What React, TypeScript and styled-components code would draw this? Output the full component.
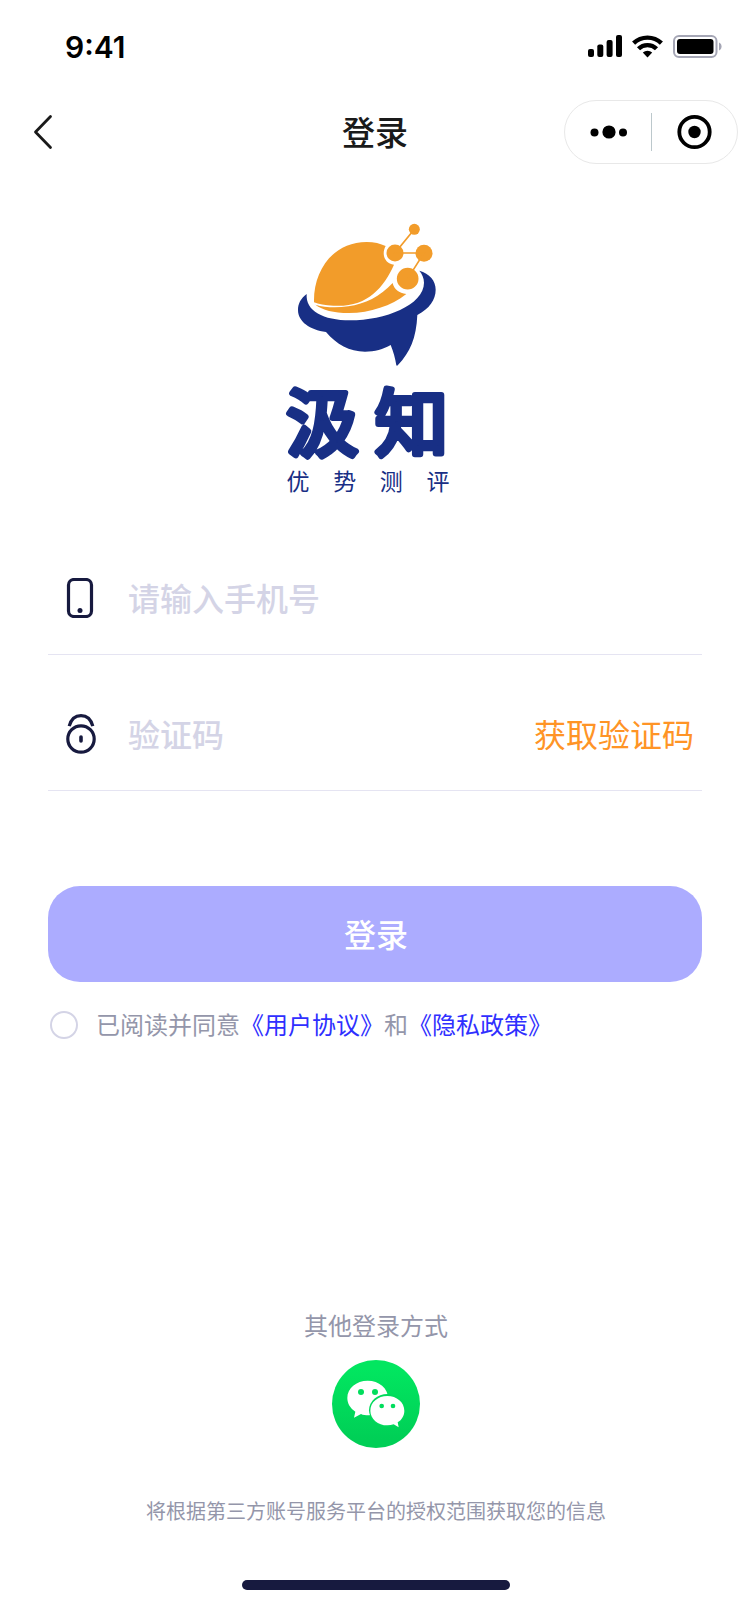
import React from 'react';
import styled, { createGlobalStyle } from 'styled-components';

const GlobalStyle = createGlobalStyle`
  *, *::before, *::after { box-sizing: border-box; }
  body {
    margin: 0;
    background: #fff;
    font-family: Inter, "Noto Sans CJK SC", sans-serif;
  }
  button, input { font-family: inherit; }
`;

const cjk = `"Noto Sans CJK SC", sans-serif`;

const Page = styled.div`
  min-height: 100vh;
  display: flex;
  flex-direction: column;
  padding-bottom: 34px;
  font-family: ${cjk};
  color: #171a3f;
`;

const StatusBar = styled.div`
  height: 88px;
  display: flex;
  align-items: center;
  justify-content: space-between;
  padding: 6px 28px 0 65px;
`;

const Clock = styled.time`
  font: 600 30px/36px Inter, sans-serif;
  color: #000;
`;

const StatusIcons = styled.div`
  display: flex;
  align-items: center;
  gap: 10px;
  padding-bottom: 2px;
  svg { display: block; }
`;

const NavBar = styled.header`
  height: 88px;
  display: grid;
  grid-template-columns: 1fr auto 1fr;
  align-items: center;
  padding: 0 12px;
`;

const IconButton = styled.button`
  display: flex;
  align-items: center;
  justify-content: center;
  border: 0;
  padding: 0;
  background: none;
  cursor: pointer;
`;

const BackButton = styled(IconButton)`
  width: 62px;
  height: 64px;
`;

const Title = styled.h1`
  margin: 0;
  padding-bottom: 2px;
  font-size: 33px;
  line-height: 48px;
  font-weight: 500;
  color: #1a1a1a;
`;

const Capsule = styled.div`
  justify-self: end;
  display: flex;
  align-items: center;
  width: 174px;
  height: 64px;
  border: 1px solid #e8e8e8;
  border-radius: 32px;
`;

const CapsuleButton = styled(IconButton)`
  flex: 1;
  height: 100%;
`;

const Divider = styled.span`
  width: 1px;
  height: 38px;
  background: #bcc8cc;
`;

const Brand = styled.div`
  display: flex;
  flex-direction: column;
  align-items: center;
  padding: 34px 14px 0 0;
  color: #182f85;
  svg { display: block; }
`;

const Wordmark = styled.svg`
  width: 166px;
  height: 86px;
  overflow: visible;
  font-family: ${cjk};
  font-size: 73px;
  font-weight: 400;
  fill: currentColor;
  stroke: currentColor;
  stroke-width: 6px;
  stroke-linejoin: round;
  stroke-linecap: round;
`;

const Tagline = styled.div`
  display: flex;
  justify-content: space-between;
  width: 163px;
  font-size: 23px;
  line-height: 28px;
`;

const Form = styled.form`
  display: flex;
  flex-direction: column;
  padding: 25px 48px 0;
`;

const Field = styled.div`
  display: flex;
  align-items: center;
  height: 136px;
  padding: 22px 8px 0 16px;
  border-bottom: 1px solid #e5e4f2;
`;

const FieldLabel = styled.label`
  display: flex;
  width: 64px;
`;

const TextInput = styled.input`
  flex: 1;
  min-width: 0;
  height: 48px;
  border: 0;
  padding: 0 0 2px;
  outline: 0;
  background: none;
  font-size: 32px;
  font-weight: 500;
  color: #171a3f;
  &::placeholder { color: #d4d4e6; opacity: 1; }
`;

const CodeButton = styled.button`
  border: 0;
  padding: 0 0 2px;
  background: none;
  font-size: 32px;
  line-height: 46px;
  color: #ff9426;
  cursor: pointer;
`;

const SubmitButton = styled.button`
  height: 96px;
  margin-top: 95px;
  border: 0;
  border-radius: 32px;
  padding: 0 0 2px 2px;
  background: #acacff;
  color: #fff;
  font-size: 32px;
  line-height: 48px;
  font-weight: 500;
  cursor: pointer;
`;

const Agreement = styled.div`
  display: flex;
  align-items: center;
  gap: 18px;
  margin-top: 24px;
  padding-left: 2px;
  font-size: 24px;
  line-height: 36px;
  color: #9496aa;
  a { color: #2f2fff; text-decoration: none; }
`;

const AgreementText = styled.div`
  padding-bottom: 2px;
`;

const RoundCheckbox = styled.input`
  appearance: none;
  flex: none;
  width: 28px;
  height: 28px;
  margin: 0;
  border: 2px solid #d4d4e6;
  border-radius: 50%;
  cursor: pointer;
  &:checked { background: #2f2fff; border-color: #2f2fff; }
`;

const Footer = styled.footer`
  display: flex;
  flex-direction: column;
  align-items: center;
  margin-top: auto;
  padding-left: 2px;
  color: #9496aa;
`;

const OtherTitle = styled.h2`
  margin: 0 0 17px;
  font-size: 24px;
  line-height: 36px;
  font-weight: 400;
`;

const Notice = styled.p`
  margin: 48px 0 0;
  font-size: 20px;
  line-height: 30px;
`;

const HomeIndicator = styled.div`
  width: 268px;
  height: 10px;
  margin-top: 54px;
  border-radius: 5px;
  background: #171a3f;
`;

const SignalIcon = () => (
  <svg width="34" height="22" viewBox="0 0 34 22" aria-hidden="true">
    <rect x="0" y="14" width="6" height="8" rx="2" />
    <rect x="9.3" y="9.5" width="6" height="12.5" rx="2" />
    <rect x="18.6" y="5" width="6" height="17" rx="2" />
    <rect x="28" y="0" width="6" height="22" rx="2" />
  </svg>
);

const WifiIcon = () => (
  <svg width="31" height="23" viewBox="0 0 31 23" aria-hidden="true">
    <g fill="none" stroke="#000" strokeWidth="4.4">
      <path d="M1.6 8.2a20 20 0 0 1 27.8 0" />
      <path d="M6.5 13.8a12.8 12.8 0 0 1 18 0" />
    </g>
    <path d="M10.8 17.6a7 7 0 0 1 9.4 0L15.5 22.6z" />
  </svg>
);

const BatteryIcon = () => (
  <svg width="49" height="23" viewBox="0 0 49 23" aria-hidden="true">
    <rect x="1" y="1" width="42.5" height="21" rx="5" fill="none" stroke="#a5a6b5" strokeWidth="2" />
    <rect x="4" y="4" width="36.5" height="15" rx="3" />
    <path d="M46 7.5c3.4 1.2 3.4 6.8 0 8z" fill="#a5a6b5" />
  </svg>
);

const BackIcon = () => (
  <svg width="20" height="36" viewBox="0 0 20 36" fill="none" stroke="#1a1a1a" strokeWidth="2.8" strokeLinecap="round" strokeLinejoin="round" aria-hidden="true">
    <path d="M17.5 2.5 2.5 18l15 15.5" />
  </svg>
);

const MoreIcon = () => (
  <svg width="38" height="14" viewBox="0 0 38 14" aria-hidden="true">
    <circle cx="5.5" cy="7.5" r="4" />
    <circle cx="20" cy="7" r="6.6" />
    <circle cx="34" cy="7.5" r="4" />
  </svg>
);

const CloseIcon = () => (
  <svg width="36" height="36" viewBox="0 0 36 36" aria-hidden="true">
    <circle cx="18.5" cy="18" r="15.2" fill="none" stroke="#000" strokeWidth="3.8" />
    <circle cx="18.5" cy="18" r="6.2" />
  </svg>
);

const LogoMark = () => (
  <svg width="200" height="170" viewBox="-6 0 600 510" aria-hidden="true">
    <path
      fill="#182f85"
      d="M110 252C92 265 84 282 84 300C84 335 120 360 168 366C200 403 238 425 285 425C314 425 340 418 362 405C370 424 376 446 379 466Q381 469 384 465C420 427 439 385 442 315C478 296 497 269 497 239C497 212 479 191 448 182C456 192 462 203 462 218C462 285 345 331 240 331C160 331 106 303 110 252Z"
    />
    <g fill="#f29c2a">
      <path d="M132 277C130 180 190 96 290 96C312 96 332 101 347 108C333 134 345 161 372 164C340 235 290 293 190 287C165 286 145 282 132 277Z" />
      <path d="M136 284C165 293 200 294 235 289C285 282 330 260 368 219C372 237 387 250 409 252C365 287 300 309 237 309C190 309 158 300 136 284Z" />
      <circle cx="375" cy="129" r="25.5" />
      <circle cx="462" cy="130" r="25.5" />
      <circle cx="433" cy="58" r="16.5" />
      <circle cx="413" cy="206" r="32.5" />
    </g>
    <path d="M433 58 375 129H462L413 206" fill="none" stroke="#f29c2a" strokeWidth="5" />
  </svg>
);

const PhoneIcon = () => (
  <svg width="32" height="40" viewBox="0 0 32 40" aria-hidden="true">
    <rect x="4.5" y="1.5" width="23" height="37" rx="5.5" fill="none" stroke="#171a3f" strokeWidth="3.2" />
    <circle cx="16" cy="32.5" r="2.5" fill="#171a3f" />
  </svg>
);

const LockIcon = () => (
  <svg width="32" height="40" viewBox="0 0 32 40" fill="none" stroke="#171a3f" strokeWidth="3.2" aria-hidden="true">
    <circle cx="17" cy="25" r="13.2" />
    <path d="M5.2 12.2C7 5.5 11.5 1.7 17 1.7S27 5.5 28.8 12.2" />
    <path d="M17 23v4" strokeWidth="3.6" strokeLinecap="round" />
  </svg>
);

const WechatIcon = () => (
  <svg width="88" height="88" viewBox="156 210 264 264" aria-hidden="true">
    <defs>
      <linearGradient id="wechat-green" x1="0" y1="0" x2="0" y2="1">
        <stop offset="0.1" stopColor="#02e660" />
        <stop offset="0.9" stopColor="#00cf56" />
      </linearGradient>
    </defs>
    <circle cx="288" cy="342" r="132" fill="url(#wechat-green)" />
    <path fill="#fff" d="M263 272C229 272 202 295 202 324C202 341 211 355 226 365L222 383L243 372C249 375 257 376 266 376C300 376 324 353 324 324C324 295 297 272 263 272Z" />
    <ellipse cx="322" cy="361" rx="55" ry="49" fill="#01da5b" />
    <path fill="#fff" d="M322 318C294 318 271 337 271 362C271 387 294 406 322 406C329 406 335 405 341 403L356 412L353 397C366 389 373 376 373 362C373 337 350 318 322 318Z" />
    <g fill="#01dd5c">
      <circle cx="243" cy="306" r="9" />
      <circle cx="285" cy="306" r="9" />
      <circle cx="305" cy="348" r="7" />
      <circle cx="339" cy="348" r="7" />
    </g>
  </svg>
);

export default function App() {
  return (
    <Page>
      <GlobalStyle />
      <StatusBar>
        <Clock>9:41</Clock>
        <StatusIcons>
          <SignalIcon />
          <WifiIcon />
          <BatteryIcon />
        </StatusIcons>
      </StatusBar>
      <NavBar>
        <BackButton type="button" aria-label="返回"><BackIcon /></BackButton>
        <Title>登录</Title>
        <Capsule>
          <CapsuleButton type="button" aria-label="更多"><MoreIcon /></CapsuleButton>
          <Divider />
          <CapsuleButton type="button" aria-label="关闭"><CloseIcon /></CapsuleButton>
        </Capsule>
      </NavBar>
      <Brand>
        <LogoMark />
        <Wordmark viewBox="0 0 166 86">
          <text x="1" y="70">汲</text>
          <text x="90" y="70">知</text>
        </Wordmark>
        <Tagline><span>优</span><span>势</span><span>测</span><span>评</span></Tagline>
      </Brand>
      <Form onSubmit={(e) => e.preventDefault()}>
        <Field>
          <FieldLabel htmlFor="phone" aria-label="手机号"><PhoneIcon /></FieldLabel>
          <TextInput id="phone" type="tel" placeholder="请输入手机号" />
        </Field>
        <Field>
          <FieldLabel htmlFor="code" aria-label="验证码"><LockIcon /></FieldLabel>
          <TextInput id="code" type="text" inputMode="numeric" placeholder="验证码" />
          <CodeButton type="button">获取验证码</CodeButton>
        </Field>
        <SubmitButton type="submit">登录</SubmitButton>
        <Agreement>
          <RoundCheckbox id="agree" type="checkbox" />
          <AgreementText>
            <label htmlFor="agree">已阅读并同意</label>
            <a href="#terms">《用户协议》</a>和<a href="#privacy">《隐私政策》</a>
          </AgreementText>
        </Agreement>
      </Form>
      <Footer>
        <OtherTitle>其他登录方式</OtherTitle>
        <IconButton type="button" aria-label="微信登录"><WechatIcon /></IconButton>
        <Notice>将根据第三方账号服务平台的授权范围获取您的信息</Notice>
        <HomeIndicator />
      </Footer>
    </Page>
  );
}
